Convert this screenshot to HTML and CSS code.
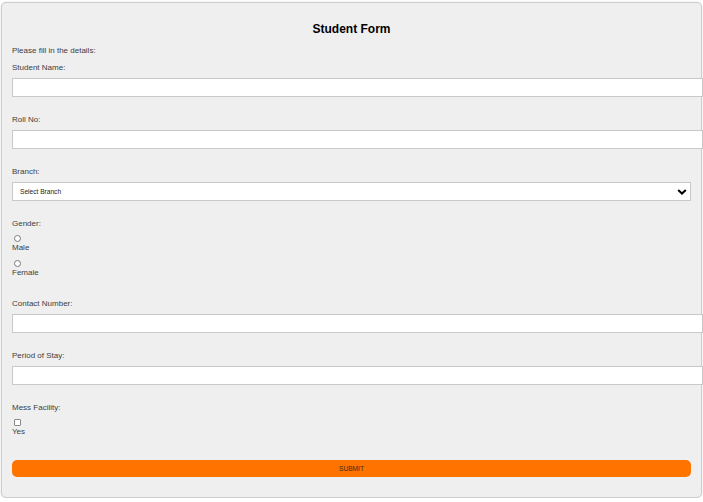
FILE: index.html
```html
<!DOCTYPE html>
<html lang="en">
<head>
<meta charset="utf-8">
<title>Student Form</title>
<link rel="stylesheet" href="styles.css">
</head>
<body>
<form class="card">
  <h1 class="title">Student Form</h1>
  <p class="intro">Please fill in the details:</p>

  <div class="field">
    <label class="label" for="name">Student Name:</label>
    <input class="text-input" type="text" id="name">
  </div>

  <div class="field">
    <label class="label" for="roll">Roll No:</label>
    <input class="text-input" type="text" id="roll">
  </div>

  <div class="field">
    <label class="label" for="branch">Branch:</label>
    <div class="select-wrap">
      <select class="select" id="branch">
        <option>Select Branch</option>
      </select>
      <svg class="chevron" width="10" height="6" viewBox="0 0 10 6" aria-hidden="true">
        <polyline points="1.2,1 5,4.6 8.8,1" fill="none" stroke="#000" stroke-width="2"/>
      </svg>
    </div>
  </div>

  <div class="field">
    <span class="label">Gender:</span>
    <div class="choice">
      <input class="tick" type="radio" name="gender" id="male">
      <label class="choice-label" for="male">Male</label>
    </div>
    <div class="choice">
      <input class="tick" type="radio" name="gender" id="female">
      <label class="choice-label" for="female">Female</label>
    </div>
  </div>

  <div class="field field-wide">
    <label class="label" for="contact">Contact Number:</label>
    <input class="text-input" type="text" id="contact">
  </div>

  <div class="field">
    <label class="label" for="stay">Period of Stay:</label>
    <input class="text-input" type="text" id="stay">
  </div>

  <div class="field">
    <span class="label">Mess Facility:</span>
    <div class="choice">
      <input class="tick box" type="checkbox" id="mess">
      <label class="choice-label" for="mess">Yes</label>
    </div>
  </div>

  <button class="submit" type="button">SUBMIT</button>
</form>
</body>
</html>
```

FILE: styles.css
```css
html, body {
  margin: 0;
  padding: 0;
  background: #ffffff;
}

body {
  padding: 2px 0 0 1px;
  font-family: "Liberation Sans", Arial, sans-serif;
}

.card {
  box-sizing: content-box;
  width: 679px;
  padding: 10px;
  background: #efefef;
  border: 1px solid #cdcdcd;
  border-radius: 5px;
  box-shadow: 0 0 2px rgba(0, 0, 0, 0.15);
  display: flex;
  flex-direction: column;
}

.title {
  margin: 9px 0 0;
  font-size: 12px;
  line-height: 14px;
  font-weight: bold;
  color: #000;
  text-align: center;
}

.intro {
  margin: 10px 0 0;
  font-size: 8px;
  line-height: 9px;
  color: #404040;
}

.field {
  display: flex;
  flex-direction: column;
  align-items: flex-start;
  margin-top: 18px;
}

.field:first-of-type {
  margin-top: 8px;
}

.field-wide {
  margin-top: 22px;
}

.label {
  font-size: 8px;
  line-height: 9px;
  color: #404040;
}

.text-input {
  box-sizing: content-box;
  width: 100%;
  height: 13px;
  margin: 6px 0 0;
  padding: 2px 5px;
  border: 1px solid #c9c9c9;
  border-radius: 0;
  background: #fff;
  font-family: "Liberation Sans", Arial, sans-serif;
  font-size: 8px;
  outline: none;
}

.select-wrap {
  position: relative;
  width: 100%;
  margin-top: 6px;
}

.select {
  display: block;
  box-sizing: border-box;
  width: 100%;
  height: 19px;
  margin: 0;
  padding: 0 0 0 7px;
  border: 1px solid #c9c9c9;
  border-radius: 0;
  background: #fff;
  appearance: none;
  -webkit-appearance: none;
  font-family: "Liberation Sans", Arial, sans-serif;
  font-size: 6.6px;
  color: #222;
  outline: none;
}

.chevron {
  position: absolute;
  right: 4px;
  top: 7px;
  pointer-events: none;
}

.choice {
  display: flex;
  flex-direction: column;
  align-items: flex-start;
  margin-top: 7px;
}

.choice + .choice {
  margin-top: 8px;
}

.tick {
  display: block;
  width: 7px;
  height: 7px;
  margin: 0 0 0 2px;
}

.box {
  appearance: none;
  -webkit-appearance: none;
  box-sizing: border-box;
  width: 7px;
  height: 7px;
  border: 1px solid #8a8a8a;
  border-radius: 1px;
  background: #fff;
}

.choice-label {
  margin-top: 1px;
  font-size: 8px;
  line-height: 9px;
  color: #404040;
}

.submit {
  display: block;
  width: 100%;
  height: 17px;
  margin: 24px 0 10px;
  padding: 0;
  border: none;
  border-radius: 5px;
  background: #ff7300;
  font-family: "Liberation Sans", Arial, sans-serif;
  font-size: 6.6px;
  color: #3a2a1a;
  cursor: pointer;
}
```
